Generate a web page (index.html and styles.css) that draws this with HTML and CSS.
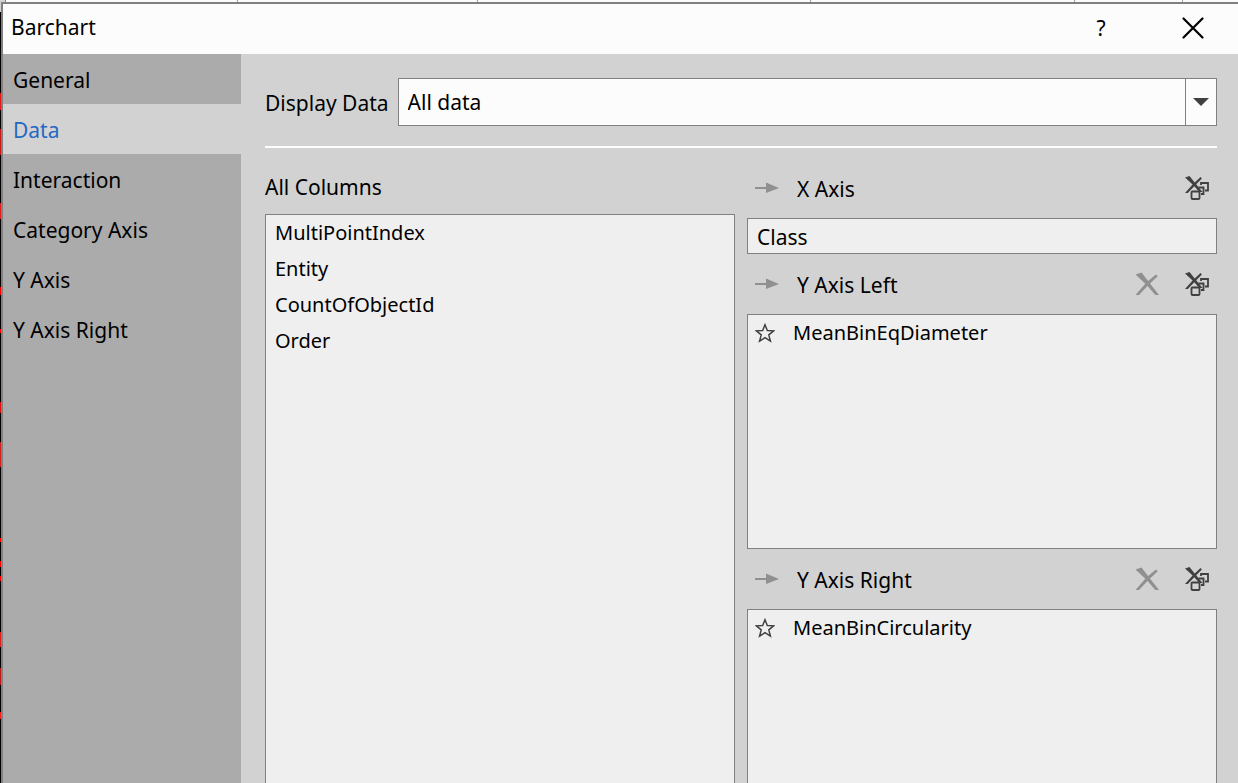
FILE: index.html
```html
<!DOCTYPE html>
<html lang="en">
<head>
<meta charset="utf-8">
<title>Barchart</title>
<link rel="stylesheet" href="styles.css">
</head>
<body>
<svg class="symbols" aria-hidden="true">
  <symbol id="arrow" viewBox="0 0 24 12"><path d="M0 5h11V0.500L24 6 11 11V7H0z" fill="#909090"/></symbol>
  <symbol id="remove" viewBox="0 0 24 24"><path d="M0.500 2.500L6.500 0.500l6.600 8.600L21 2.500l1.800 1.800-7.800 7.200L24 23h-3.600l-7.900-9L4 23H0.500l9.800-11.200z" fill="#909090"/></symbol>
  <symbol id="remove-all" viewBox="0 0 24 24">
    <path d="M0 1.500L4.500 0l5.200 6.500L15.500 1l1.400 1.400-5.700 5.800 6.300 7.800h-3.200l-5-5.700L2.800 17H0l7.600-8.400z" fill="#404040"/>
    <g fill="none" stroke="#404040" stroke-width="1.800">
      <rect x="6.500" y="15.500" width="8" height="7.500" rx="1"/>
      <path d="M13.500 11.500h5v6.500h-2.500M16 9V7h7v7.500h-3"/>
    </g>
  </symbol>
  <symbol id="star" viewBox="0 0 18 18"><path d="M9 1.500l2.100 5.300 5.700.3-4.400 3.600 1.500 5.700L9 13.200l-4.900 3.200 1.500-5.700L1.200 7.100l5.700-.3z" fill="none" stroke="#404040" stroke-width="1.300"/></symbol>
</svg>
<div class="sheet-edge"></div>
<div class="workspace">
  <div class="plot-edge"></div>
  <section class="dialog" aria-labelledby="dialog-title">
    <header class="titlebar">
      <h1 class="title" id="dialog-title">Barchart</h1>
      <button class="title-button" type="button" aria-label="Help">?</button>
      <button class="title-button close" type="button" aria-label="Close">
        <svg width="22" height="22" viewBox="0 0 22 22"><path d="M1.500 1.500l19 19M20.500 1.500l-19 19" stroke="#000" stroke-width="2.200" stroke-linecap="round"/></svg>
      </button>
    </header>
    <div class="content">
      <nav class="sidebar">
        <a class="tab" href="#general">General</a>
        <a class="tab active" href="#data" aria-current="page">Data</a>
        <a class="tab" href="#interaction">Interaction</a>
        <a class="tab" href="#category-axis">Category Axis</a>
        <a class="tab" href="#y-axis">Y Axis</a>
        <a class="tab" href="#y-axis-right">Y Axis Right</a>
      </nav>
      <main class="panel">
        <div class="display-row">
          <label class="display-label" for="display-data">Display Data</label>
          <div class="combo">
            <select class="combo-select" id="display-data"><option>All data</option></select>
            <span class="combo-arrow"><svg width="16" height="8" viewBox="0 0 16 8"><path d="M0 0h16L8 8z" fill="#404040"/></svg></span>
          </div>
        </div>
        <hr class="divider">
        <div class="columns">
          <section class="column">
            <h2 class="column-title" id="all-columns">All Columns</h2>
            <ul class="list fill" aria-labelledby="all-columns">
              <li class="item">MultiPointIndex</li>
              <li class="item">Entity</li>
              <li class="item">CountOfObjectId</li>
              <li class="item">Order</li>
            </ul>
          </section>
          <section class="column">
            <div class="axis-head first">
              <button class="icon-button" type="button" aria-label="Add to X Axis"><svg width="24" height="12"><use href="#arrow"/></svg></button>
              <label class="axis-name" for="x-axis">X Axis</label>
              <button class="icon-button" type="button" aria-label="Clear X Axis"><svg width="24" height="24"><use href="#remove-all"/></svg></button>
            </div>
            <input class="field" id="x-axis" type="text" value="Class" readonly>
            <div class="axis-head">
              <button class="icon-button" type="button" aria-label="Add to Y Axis Left"><svg width="24" height="12"><use href="#arrow"/></svg></button>
              <h2 class="axis-name" id="y-left">Y Axis Left</h2>
              <button class="icon-button" type="button" aria-label="Remove from Y Axis Left"><svg width="24" height="24"><use href="#remove"/></svg></button>
              <button class="icon-button" type="button" aria-label="Clear Y Axis Left"><svg width="24" height="24"><use href="#remove-all"/></svg></button>
            </div>
            <ul class="list axis-list" aria-labelledby="y-left">
              <li class="item starred"><svg width="20" height="20"><use href="#star"/></svg>MeanBinEqDiameter</li>
            </ul>
            <div class="axis-head">
              <button class="icon-button" type="button" aria-label="Add to Y Axis Right"><svg width="24" height="12"><use href="#arrow"/></svg></button>
              <h2 class="axis-name" id="y-right">Y Axis Right</h2>
              <button class="icon-button" type="button" aria-label="Remove from Y Axis Right"><svg width="24" height="24"><use href="#remove"/></svg></button>
              <button class="icon-button" type="button" aria-label="Clear Y Axis Right"><svg width="24" height="24"><use href="#remove-all"/></svg></button>
            </div>
            <ul class="list fill" aria-labelledby="y-right">
              <li class="item starred"><svg width="20" height="20"><use href="#star"/></svg>MeanBinCircularity</li>
            </ul>
          </section>
        </div>
      </main>
    </div>
  </section>
</div>
</body>
</html>
```
FILE: styles.css
```css
* { box-sizing: border-box; }

body {
  margin: 0;
  height: 100vh;
  overflow: hidden;
  display: flex;
  flex-direction: column;
  font: 21px/36px "Noto Sans", sans-serif;
  color: #000;
}

h1, h2, ul { margin: 0; padding: 0; font-size: inherit; font-weight: normal; }
button, input, select { font: inherit; color: inherit; border: 0; padding: 0; background: none; }
svg { display: block; }
.symbols { display: none; }

/* Grid lines of the sheet behind the dialog */
.sheet-edge {
  flex: none;
  height: 2px;
  background: linear-gradient(90deg,
    #d2d2d2 5px, #808080 5px 6px, #fcfcfc 6px 237px, #a0a0a0 237px 238px,
    #fcfcfc 238px 477px, #a0a0a0 477px 478px, #fcfcfc 478px 810px,
    #a0a0a0 810px 811px, #fcfcfc 811px 1074px, #a0a0a0 1074px 1075px,
    #fcfcfc 1075px 1182px, #a0a0a0 1182px 1183px, #fcfcfc 1183px);
}

.workspace { flex: 1; min-height: 0; display: flex; }

/* Sliver of the plot behind the dialog */
.plot-edge {
  flex: none;
  width: 1px;
  background: linear-gradient(
    #d2d2d2 10px, #000 10px 91px, #e01818 91px 108px, #000 108px 127px,
    #c81818 127px 153px, #000 153px 201px, #e02020 201px 217px, #000 217px 285px,
    #f00 285px 293px, #000 293px 327px, #f00 327px 331px, #000 331px 400px,
    #e01010 400px 411px, #000 411px 440px, #d02020 440px 465px, #000 465px 536px,
    #f00 536px 540px, #000 540px 559px, #f00 559px 565px, #000 565px 574px,
    #f00 574px 579px, #000 579px 630px, #e02020 630px 645px, #000 645px 666px,
    #c01818 666px 683px, #000 683px 710px, #f02020 710px 717px, #000 717px);
}

.dialog {
  flex: 1;
  min-width: 0;
  display: flex;
  flex-direction: column;
  border: solid #808080;
  border-width: 2px 0 0 2px;
  background: #d2d2d2;
}

.titlebar {
  flex: none;
  display: flex;
  align-items: center;
  height: 50px;
  padding: 0 33px 2px 8px;
  background: #fcfcfc;
}
.title { flex: 1; padding-bottom: 2px; }
.title-button { width: 24px; height: 36px; display: grid; place-items: center; }
.close { margin-left: 68px; }

.content { flex: 1; min-height: 0; display: flex; }

.sidebar { flex: none; width: 238px; background: #ababab; }
.tab {
  display: block;
  padding: 8px 10px 6px;
  color: #000;
  text-decoration: none;
}
.tab.active { background: #d2d2d2; color: #2468c4; }

.panel {
  flex: 1;
  min-width: 0;
  display: flex;
  flex-direction: column;
  padding: 24px 21px 0 24px;
}

.display-row { display: flex; align-items: center; gap: 9px; }
.display-label { padding-top: 2px; }
.combo {
  flex: 1;
  display: grid;
  grid-template-columns: 1fr 31px;
  height: 48px;
  border: 1px solid #808080;
  background: #fcfcfc;
}
.combo-select {
  grid-area: 1 / 1 / 2 / 3;
  appearance: none;
  padding: 0 40px 0 9px;
}
.combo-arrow {
  grid-area: 1 / 2;
  display: grid;
  place-items: center;
  border-left: 1px solid #808080;
  pointer-events: none;
}

.divider { width: 100%; height: 2px; margin: 20px 0 0; border: 0; background: #fff; }

.columns {
  flex: 1;
  min-height: 0;
  display: grid;
  grid-template-columns: 1fr 1fr;
  gap: 12px;
}
.column { min-width: 0; min-height: 0; display: flex; flex-direction: column; }
.column-title { flex: none; padding: 21px 0 9px; }

.list {
  list-style: none;
  font-size: 20px;
  border: 1px solid #808080;
  background: #efefef;
}
.fill { flex: 1; min-height: 0; border-bottom: 0; }
.axis-list { flex: none; height: 235px; }
.item { padding: 0 9px; }
.starred { display: flex; align-items: center; gap: 18px; padding: 0 7px; }

.axis-head { flex: none; display: flex; align-items: center; height: 60px; padding: 0 8px; }
.axis-head.first { height: 70px; padding-top: 10px; }
.axis-name { flex: 1; padding: 2px 18px 0; }
.icon-button + .icon-button { margin-left: 26px; }

.field {
  flex: none;
  width: 100%;
  height: 36px;
  padding: 2px 9px 0;
  border: 1px solid #808080;
  background: #efefef;
}
```
